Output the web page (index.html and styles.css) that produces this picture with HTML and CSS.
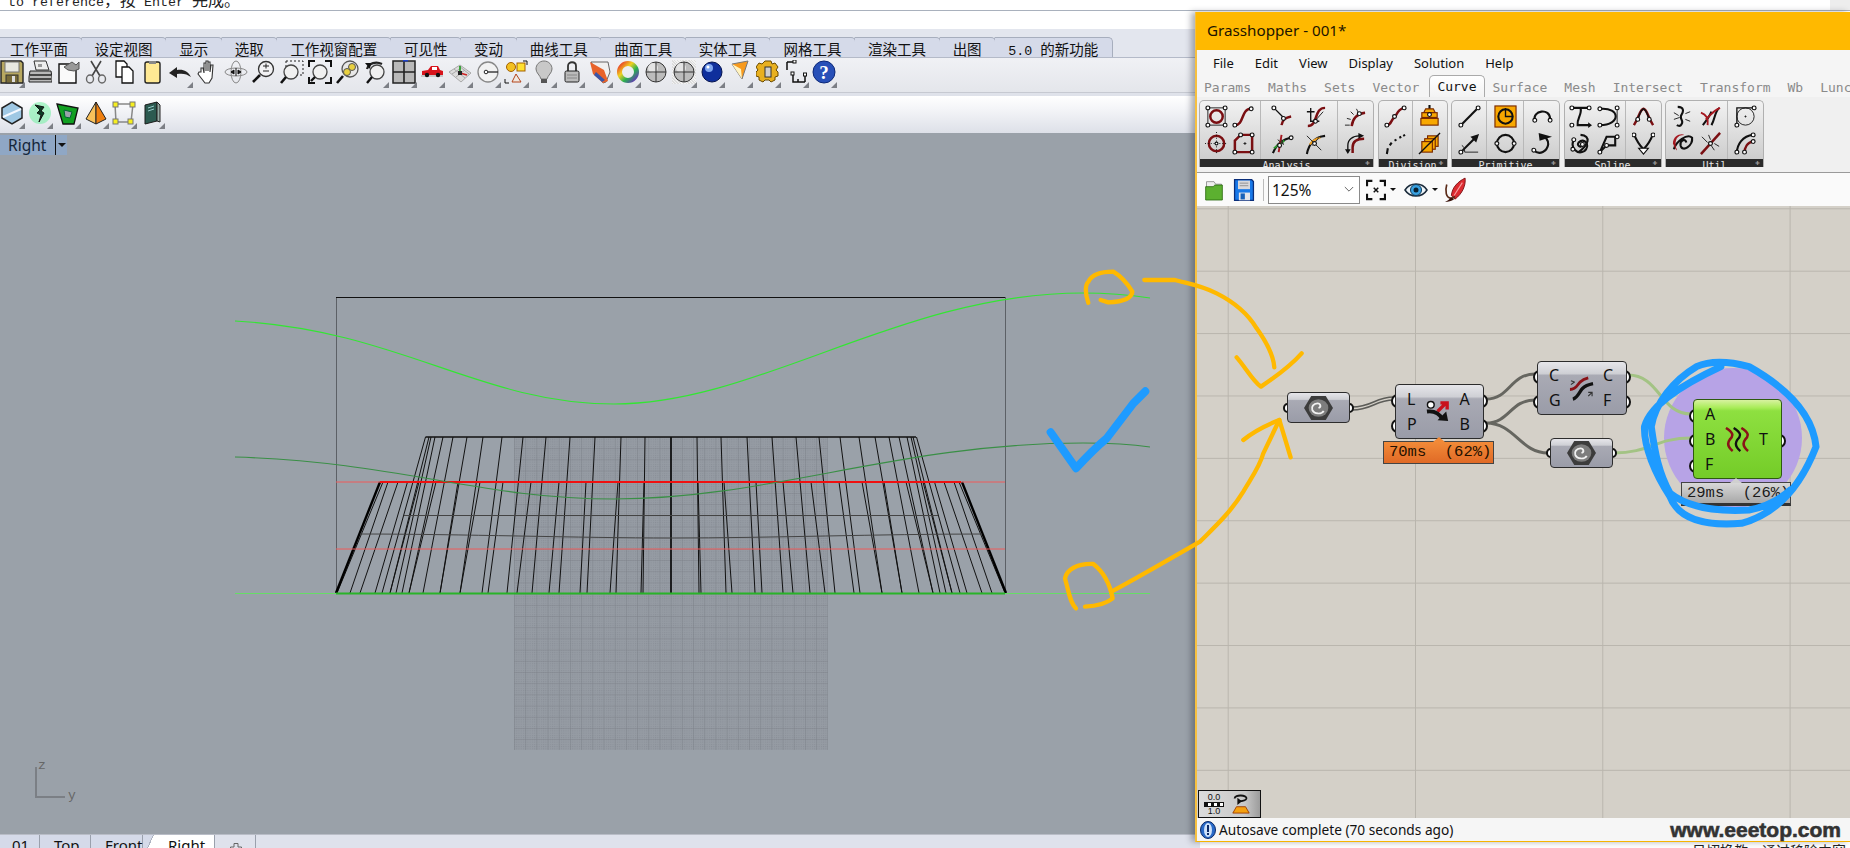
FILE: index.html
```html
<!DOCTYPE html>
<html lang="zh">
<head>
<meta charset="utf-8">
<title>Rhino + Grasshopper</title>
<link rel="stylesheet" href="styles.css">
</head>
<body>
<div class="cmd"><span class="cmdtext">to reference<span class="cj">，按</span> Enter <span class="cj">完成。</span></span><span class="scrollbtn"></span></div>
<div class="workspace">
  <div class="rhino">
    <div class="ribbon-top"></div>
    <div class="ribbon-tabs">
      <span class="rtab">工作平面</span><span class="rtab">设定视图</span><span class="rtab">显示</span><span class="rtab">选取</span><span class="rtab">工作视窗配置</span><span class="rtab">可见性</span><span class="rtab">变动</span><span class="rtab">曲线工具</span><span class="rtab">曲面工具</span><span class="rtab">实体工具</span><span class="rtab">网格工具</span><span class="rtab">渲染工具</span><span class="rtab">出图</span><span class="rtab"><span class="mono">5.0 </span>的新功能</span>
    </div>
    <div class="toolbar tb1">
      <span class="tb more"><svg viewBox="0 0 24 24"><path d="M1 1h20l2 2v20H1z" fill="#b8a860" stroke="#222" stroke-width="1.4"/><rect x="5" y="2" width="14" height="10" fill="#e8e8e0" stroke="#777"/><rect x="6" y="15" width="12" height="8" fill="#776a38" stroke="#333"/><rect x="12" y="16" width="3" height="6" fill="#ddd"/></svg></span>
      <span class="tb"><svg viewBox="0 0 24 24"><path d="M6 1h12l3 9H8z" fill="#eee" stroke="#333"/><path d="M2 11h21l1 6v5H1v-5z" fill="#b8b8b8" stroke="#222"/><path d="M2 15h21M2 19h21" stroke="#222" stroke-width="1.5"/><rect x="10" y="4" width="4" height="3" fill="#999"/></svg></span>
      <span class="tb"><svg viewBox="0 0 24 24"><path d="M3 4h11l6 6v13H3z" fill="#fafafa" stroke="#111" stroke-width="1.4"/><path d="M8 7l8-5 4 3 3-3v7l-5 2-6-1z" fill="#999" stroke="#555"/></svg></span>
      <span class="tb"><svg viewBox="0 0 24 24"><path d="M7 1l9 15M17 1L8 16" stroke="#444" stroke-width="1.6" fill="none"/><ellipse cx="6" cy="19" rx="3.5" ry="4" fill="none" stroke="#666" stroke-width="1.4"/><ellipse cx="18" cy="19" rx="3.5" ry="4" fill="none" stroke="#666" stroke-width="1.4"/></svg></span>
      <span class="tb"><svg viewBox="0 0 24 24"><path d="M4 1h8l3 3v13H4z" fill="#fff" stroke="#111" stroke-width="1.3"/><path d="M10 7h7l4 4v12H10z" fill="#fff" stroke="#111" stroke-width="1.3"/></svg></span>
      <span class="tb"><svg viewBox="0 0 24 24"><rect x="5" y="2" width="15" height="21" rx="2" fill="#ffe994" stroke="#222" stroke-width="1.4"/><rect x="9" y="1" width="7" height="3" fill="#888"/></svg></span>
      <span class="tb more"><svg viewBox="0 0 24 24"><path d="M1 13l8-6v3c6-1 11 1 14 7-4-3-8-4-14-3v4z" fill="#222"/></svg></span>
      <span class="tb"><svg viewBox="0 0 24 24"><path d="M5 12V8l2 0 1 5V3h2v8V1h2v10V2h2v10l1-7h2l-1 13-3 5H9L2 14l1-2z" fill="#fff" stroke="#333" stroke-width="1.1"/></svg></span>
      <span class="tb"><svg viewBox="0 0 24 24"><ellipse cx="12" cy="12" rx="11" ry="4" fill="none" stroke="#888"/><ellipse cx="12" cy="12" rx="5" ry="11" fill="none" stroke="#888"/><path d="M12 8v8M7 12l3-2v4zM17 12l-3-2v4z" stroke="#111" fill="#111"/></svg></span>
      <span class="tb"><svg viewBox="0 0 24 24"><circle cx="14" cy="9" r="7.5" fill="#f2f2f4" stroke="#333" stroke-width="1.3"/><path d="M8 15l-7 7" stroke="#111" stroke-width="2.6"/><path d="M11 6h6M14 3.500v5M11 11h6" stroke="#222"/></svg></span>
      <span class="tb"><svg viewBox="0 0 24 24"><rect x="6" y="1" width="17" height="14" fill="none" stroke="#222" stroke-dasharray="2 2"/><circle cx="11" cy="12" r="7" fill="#f0f0f0" stroke="#444" stroke-width="1.3"/><path d="M6 17l-5 6" stroke="#111" stroke-width="2.6"/></svg></span>
      <span class="tb"><svg viewBox="0 0 24 24"><circle cx="12" cy="12" r="7" fill="#f0f0f0" stroke="#444" stroke-width="1.3"/><path d="M7 17l-4 4" stroke="#111" stroke-width="2.4"/><path d="M1 7V1h6M17 1h6v6M1 17v6h6M23 17v6h-6" fill="none" stroke="#111" stroke-width="2"/></svg></span>
      <span class="tb"><svg viewBox="0 0 24 24"><circle cx="14" cy="9" r="8" fill="#e8e8e8" stroke="#555" stroke-width="1.3"/><circle cx="16" cy="7" r="3.500" fill="#e8d040" stroke="#555"/><circle cx="11" cy="12" r="3.500" fill="#e8d040" stroke="#555"/><path d="M7 16l-6 7" stroke="#111" stroke-width="2.6"/></svg></span>
      <span class="tb more"><svg viewBox="0 0 24 24"><circle cx="13" cy="12" r="7" fill="#f0f0f0" stroke="#444" stroke-width="1.3"/><path d="M8 17l-5 6" stroke="#111" stroke-width="2.4"/><path d="M3 9c2-6 9-8 15-5" fill="none" stroke="#222" stroke-width="2.2"/><path d="M1 3l6 0-1 6z" fill="#111"/></svg></span>
      <span class="tb more"><svg viewBox="0 0 24 24"><rect x="1" y="1" width="22" height="22" fill="#b9b9b9" stroke="#222" stroke-width="1.5"/><path d="M12 1v22M1 12h22" stroke="#222" stroke-width="1.6"/><rect x="11" y="0" width="5" height="1.500" fill="#2244cc"/></svg></span>
      <span class="tb more"><svg viewBox="0 0 24 24"><path d="M1 16h22" stroke="#bbb" stroke-width="1.500"/><path d="M2 15v-4l6-1 3-4h7l2 4 3 1v4z" fill="#d8141c"/><rect x="12" y="7" width="5" height="3" fill="#fff"/><circle cx="7" cy="15" r="2.200" fill="#111"/><circle cx="18" cy="15" r="2.200" fill="#111"/></svg></span>
      <span class="tb more"><svg viewBox="0 0 24 24"><path d="M1 12L12 5l11 8-10 9z" fill="#dcdcdc" stroke="#aaa"/><path d="M6 9l11 9M11 6l10 8M4 14l9-6M8 17l9-7" stroke="#aaa" fill="none"/><path d="M12 13V6" stroke="#1a9a1a" stroke-width="1.600"/><path d="M12 13l7 2" stroke="#cc2222" stroke-width="1.600"/><path d="M10 11h4v4h-4z" fill="#222"/></svg></span>
      <span class="tb more"><svg viewBox="0 0 24 24"><circle cx="12" cy="12" r="10" fill="#f2f2f2" stroke="#888" stroke-width="1.300"/><circle cx="10" cy="12" r="1.800" fill="#fff" stroke="#222"/><path d="M12 12h10" stroke="#222" stroke-width="1.300"/></svg></span>
      <span class="tb more"><svg viewBox="0 0 24 24"><circle cx="7" cy="7" r="4.500" fill="#f3c020" stroke="#a46000"/><rect x="13" y="3" width="8" height="8" fill="#ffe030" stroke="#a46000"/><path d="M12 14l5 8H8z" fill="#f0e8e0" stroke="#b4441a"/><path d="M1 19v4h4M23 1h-4M23 1v4" fill="none" stroke="#111"/></svg></span>
      <span class="tb more"><svg viewBox="0 0 24 24"><path d="M12 1c5 0 8 4 8 8 0 4-4 6-5 10H9C8 15 4 13 4 9c0-4 3-8 8-8z" fill="#c8c8c8" stroke="#777"/><rect x="9" y="19" width="6" height="4" fill="#555"/></svg></span>
      <span class="tb more"><svg viewBox="0 0 24 24"><path d="M8 11V6c0-5 8-5 8 0v5" fill="none" stroke="#333" stroke-width="1.800"/><rect x="5" y="11" width="14" height="11" rx="1.500" fill="#bbb" stroke="#222"/><path d="M7 15h10M7 18h10" stroke="#888"/></svg></span>
      <span class="tb more"><svg viewBox="0 0 24 24"><path d="M3 2h17l2 10-4 10-3 1z" fill="#f0f0f0" stroke="#666"/><path d="M2 2l14 8 4 11-5 2L5 14z" fill="#e8622a"/><path d="M8 12l9 8-3 2-8-7z" fill="#3b56a8"/></svg></span>
      <span class="tb more"><svg viewBox="0 0 24 24"><circle cx="12" cy="12" r="8.500" fill="none" stroke="url(#rb)" stroke-width="5"/><defs><linearGradient id="rb" x1="0" y1="0" x2="1" y2="1"><stop offset="0" stop-color="#e8342a"/><stop offset=".35" stop-color="#f0d020"/><stop offset=".65" stop-color="#28b050"/><stop offset="1" stop-color="#6a2cc0"/></linearGradient></defs></svg></span>
      <span class="tb"><svg viewBox="0 0 24 24"><circle cx="12" cy="12" r="10" fill="#bcbcbc" stroke="#333"/><circle cx="9" cy="8" r="5" fill="#eee" opacity=".8"/><path d="M12 2v20M2 12h20" stroke="#333"/></svg></span>
      <span class="tb more halftone"><svg viewBox="0 0 24 24"><circle cx="12" cy="12" r="10" fill="#bcbcbc" stroke="#333"/><circle cx="9" cy="8" r="5" fill="#eee" opacity=".8"/><path d="M12 2v20M2 12h20" stroke="#333"/></svg></span>
      <span class="tb more"><svg viewBox="0 0 24 24"><circle cx="12" cy="12" r="10" fill="#0f2f9c" stroke="#05134d"/><circle cx="9" cy="8" r="4" fill="#7fa6f0"/><circle cx="8" cy="7" r="1.500" fill="#fff"/></svg></span>
      <span class="tb more"><svg viewBox="0 0 24 24"><path d="M4 4l16-3-6 18z" fill="#f79a1e" stroke="#777"/><path d="M4 4l9 5 1 10z" fill="#fff3c0"/></svg></span>
      <span class="tb more"><svg viewBox="0 0 24 24"><path d="M9 1h6l1 3 3-1 3 4-2 3 2 2v4l-3 1 0 3-4 2-2-2-4 0-2 2-4-2 0-3-3-1v-4l2-2-2-3 3-4 3 1z" fill="#e8b020" stroke="#6a4a00"/><rect x="9" y="7" width="6" height="10" fill="#cfcfcf" stroke="#333"/></svg></span>
      <span class="tb more"><svg viewBox="0 0 24 24"><path d="M3 2v8M3 2h7M9 14v8h12M14 22v-3M21 22v-7" fill="none" stroke="#111" stroke-width="1.500"/><rect x="9" y="0" width="3" height="3" fill="#fff" stroke="#111"/><rect x="7" y="12" width="3" height="3" fill="#fff" stroke="#111"/><rect x="19.500" y="13" width="3" height="3" fill="#fff" stroke="#111"/></svg></span>
      <span class="tb more"><svg viewBox="0 0 24 24"><circle cx="12" cy="12" r="11" fill="#2850b8" stroke="#0c2878"/><text x="12" y="19" class="qmark">?</text></svg></span>
    </div>
    <div class="band"></div>
    <div class="toolbar tb2">
      <span class="tb more"><svg viewBox="0 0 24 24"><path d="M12 1l10 6v10l-10 6L2 17V7z" fill="#9fc8e4" stroke="#222" stroke-width="1.500"/><path d="M3 16L21 8" stroke="#f4f8ff" stroke-width="2"/></svg></span>
      <span class="tb more"><svg viewBox="0 0 24 24"><circle cx="12" cy="12" r="11" fill="#70f0a0" opacity=".55"/><path d="M7 4l9 2-3 4 3 2-5 9 2-7-4-2 3-3z" fill="#0b3d24" stroke="#111"/></svg></span>
      <span class="tb more"><svg viewBox="0 0 24 24"><path d="M1 3l21 4-4 16H7z" fill="#11a022" stroke="#111" stroke-width="1.300"/><path d="M8 9l8 2-2 6-5-1z" fill="#9aa1a9" stroke="#063"/></svg></span>
      <span class="tb more"><svg viewBox="0 0 24 24"><path d="M12 1L2 18l10 5z" fill="#f9c05a" stroke="#222"/><path d="M12 1l10 17-10 5z" fill="#ef7f10" stroke="#222"/></svg></span>
      <span class="tb more"><svg viewBox="0 0 24 24"><path d="M3 3h18l-2 18H4z" fill="none" stroke="#888" stroke-width="1.500"/><rect x="1" y="1" width="5" height="5" fill="#f6ee20" stroke="#777"/><rect x="18" y="1" width="5" height="5" fill="#f6ee20" stroke="#777"/><rect x="1" y="18" width="5" height="5" fill="#f6ee20" stroke="#777"/><rect x="16" y="18" width="5" height="5" fill="#f6ee20" stroke="#777"/></svg></span>
      <span class="tb more"><svg viewBox="0 0 24 24"><path d="M5 4l12-3v19L5 23z" fill="#2c5a50" stroke="#1a1a1a"/><path d="M17 1l3 3v17l-3-1z" fill="#96aaa4" stroke="#222"/><path d="M8 7l6-2M8 10l6-2" stroke="#9cc" /></svg></span>
    </div>
    <div class="viewport">
      <div class="vp-label"><span class="vp-name">Right</span><span class="vp-arrow"></span></div>
      <svg class="scene" viewBox="0 133 1200 701">
        <defs>
          <pattern id="minor" x="514" y="437" width="2.240" height="2.240" patternUnits="userSpaceOnUse"><rect width="1" height="1" fill="#8a8f98"/></pattern>
          <pattern id="major" x="514" y="437" width="11.190" height="11.190" patternUnits="userSpaceOnUse"><path d="M0 0H11.190M0 0V11.190" class="gridline"/></pattern>
          <g id="half">
            <path class="wire-dark" d="M425.500 437L382 593M429 437L390 593M431 437L396 593M435 437L402 593M443 437L409 593M453 437L423 593M467 437L440 593M483 437L460 593M502 437L482 593M523 437L507 593M546 437L532 593M570 437L559 593M595 437L587 593M621 437L616 593M645 437L643 593"/>
            <path class="wire-dark" d="M383 482L337 593M388 482L350 593M398 482L360 593M407.500 482L375 593M419 482L390 593M436 482L409 593M458 482L440 593M480 482L460 593M503 482L488 593M531 482L517 593M559 482L549 593M586 482L580 593M618 482L610 593M644 482L641 593"/>
            <path class="wire-edge" d="M380 482L336 593"/>
          </g>
        </defs>
        <rect x="514" y="437" width="314" height="313" class="gridbg"/>
        <rect x="514" y="437" width="314" height="313" fill="url(#minor)"/>
        <rect x="514" y="437" width="314" height="313" fill="url(#major)"/>
        <rect x="336.500" y="297.500" width="669" height="296" class="bbox"/>
        <path d="M336 297.500H1005" class="bbox-top"/>
        <use href="#half"/>
        <use href="#half" transform="translate(1342 0) scale(-1 1)"/>
        <path d="M671 437V593" class="wire-center"/>
        <path d="M425.500 437H916" class="wire-top"/>
        <path d="M404 515.500H938" class="wire-soft"/>
        <path d="M360 534C460 534 580 538 671 538C770 538 880 534 982 534" class="wire-soft"/>
        <path d="M336 482H1005M336 549H1005" class="red-thin"/>
        <path d="M380 482H961" class="red-thick"/>
        <path d="M235 321C400 330 480 404 614 404C760 404 900 293 1083 293C1110 293 1130 295 1150 298" class="crv-bright"/>
        <path d="M235 457C400 462 480 499 614 499C770 499 900 443 1083 443C1110 443 1130 444 1150 447" class="crv-dark"/>
        <path d="M235 593.500H1150" class="base-thin"/>
        <path d="M336 593.500H1005" class="base-thick"/>
        <path d="M36 767V797H65" class="axis"/>
        <text x="38" y="769" class="axis-label">z</text>
        <text x="68" y="799" class="axis-label">y</text>
      </svg>
    </div>
    <div class="vp-tabs">
      <span class="vtab vt01">01</span><span class="vtab">Top</span><span class="vtab vfront">Front</span><span class="vtab vright">Right</span><span class="vtab vplus"><svg class="plus" viewBox="0 0 12 12"><path d="M4 .5h4v3.500h3.500v4H8v3.500H4V8H.5V4H4z"/></svg></span>
    </div>
  </div>
  <div class="other"><span class="other-text">日切换教，通过移除内容</span></div>
</div>

<div class="gh">
  <div class="gh-title">Grasshopper - 001*</div>
  <div class="gh-menu"><span>File</span><span>Edit</span><span>View</span><span>Display</span><span>Solution</span><span>Help</span></div>
  <div class="gh-tabs"><span>Params</span><span>Maths</span><span>Sets</span><span>Vector</span><span class="on">Curve</span><span>Surface</span><span>Mesh</span><span>Intersect</span><span>Transform</span><span>Wb</span><span>Lunchbox</span></div>
  <div class="gh-ribbon">
    <div class="panel">
      <div class="panel-body">
        <div class="grp w61">
          <svg viewBox="0 0 24 24"><rect x="3" y="3" width="18" height="18" class="thin"/><circle cx="12" cy="12" r="6.500" class="red"/><circle cx="3" cy="3" r="2" class="pt"/><circle cx="21" cy="3" r="2" class="pt"/><circle cx="3" cy="21" r="2" class="pt"/><circle cx="21" cy="21" r="2" class="pt"/></svg>
          <svg viewBox="0 0 24 24"><circle cx="12" cy="12" r="8" class="red"/><path d="M12 0v24M0 12h24" class="dots"/><circle cx="12" cy="12" r="1.500" class="pt"/></svg>
          <svg viewBox="0 0 24 24"><path d="M3 21C13 21 9 4 20 4" class="red"/><circle cx="3" cy="21" r="2" class="pt"/><circle cx="20" cy="4" r="2" class="pt"/></svg>
          <svg viewBox="0 0 24 24"><path d="M3 9L9 3H21V21H3Z" class="red"/><path d="M12 12h3M13.500 10.500v3" class="thin"/><circle cx="3" cy="21" r="2" class="pt"/><circle cx="21" cy="21" r="2" class="pt"/><circle cx="21" cy="3" r="2" class="pt"/><circle cx="9" cy="3" r="2" class="pt"/></svg>
        </div>
        <div class="grp w77">
          <svg viewBox="0 0 24 24"><path d="M3 3L14 14" class="blk thin2"/><path d="M11 21C12 15 15 13 21 12" class="red"/><circle cx="3" cy="3" r="2" class="pt"/><circle cx="13" cy="14" r="2" class="pt"/></svg>
          <svg viewBox="0 0 24 24"><path d="M2 22C6 12 12 7 22 6" class="blk"/><path d="M3 17L14 9" class="grn"/><path d="M11 3L8 21" class="red2"/><path d="M7 8l6 5-2-5" class="thin"/><circle cx="21" cy="6" r="2" class="pt"/><circle cx="9" cy="14" r="2" class="pt"/></svg>
          <svg viewBox="0 0 24 24"><path d="M4 22C15 22 10 3 22 3" class="red"/><path d="M7 3V17H16M3 7H11" class="blk thin2"/><path d="M12 16L20 7" class="thin"/><circle cx="12" cy="17" r="2" class="pt"/></svg>
          <svg viewBox="0 0 24 24"><path d="M3 23C5 12 12 5 22 4" class="blk"/><path d="M6 13C9 9 12 7 17 6" class="ora"/><path d="M3 4l15 15M17 4L9 14" class="thin"/><circle cx="11" cy="12" r="2" class="pt"/></svg>
        </div>
        <div class="grp w35">
          <svg viewBox="0 0 24 24"><path d="M8 22C9 14 14 9 22 8" class="red"/><path d="M13 4l2 4M3 14l4 1M7 7l3 3M1 21h5" class="thin"/><circle cx="16" cy="9" r="2" class="pt"/></svg>
          <svg viewBox="0 0 24 24"><path d="M9 22V16C9 10 13 7 21 7" class="red"/><path d="M4 21V14C4 8 9 4 16 4" class="blk thin2"/><path d="M1 18h6l-3 5zM15 1l6 3-6 3z" class="fillk"/></svg>
        </div>
      </div>
      <div class="panel-foot">Analysis</div>
    </div>
    <div class="panel">
      <div class="panel-body">
        <div class="grp w34">
          <svg viewBox="0 0 24 24"><path d="M3 21C8 21 7 15 11 13C14 10 13 5 21 3" class="red"/><circle cx="3" cy="21" r="2" class="pt"/><circle cx="11" cy="12" r="2" class="pt"/><circle cx="21" cy="3" r="2" class="pt"/></svg>
          <svg viewBox="0 0 24 24"><path d="M3 23L4 17M6 14L8 11M11 9L13 8M16 6L18 5M20 4L22 3" class="blk"/></svg>
        </div>
        <div class="grp w34">
          <svg viewBox="0 0 24 24"><path d="M12 0V11" class="blk"/><path d="M8 4h8l2 4H6z" class="orab"/><rect x="4" y="8" width="16" height="5" class="orab"/><rect x="3" y="14" width="18" height="7" class="orab"/><circle cx="12" cy="10" r="2" class="pt"/></svg>
          <svg viewBox="0 0 24 24"><rect x="10" y="4" width="11" height="11" class="orab"/><rect x="7" y="7" width="11" height="11" class="orab"/><rect x="4" y="10" width="11" height="11" class="orab"/><path d="M1 23L23 1" class="blk thin2"/></svg>
        </div>
      </div>
      <div class="panel-foot">Division</div>
    </div>
    <div class="panel">
      <div class="panel-body">
        <div class="grp w35">
          <svg viewBox="0 0 24 24"><path d="M4 20L20 4" class="blk"/><circle cx="3" cy="21" r="2" class="pt"/><circle cx="21" cy="3" r="2" class="pt"/></svg>
          <svg viewBox="0 0 24 24"><path d="M3 21L21 3M21 21H7C7 17 6 15 4 14" class="thin"/><path d="M3 21L17 7" class="blk"/><path d="M22 2l-9 3 6 6z" class="fillk"/><circle cx="3" cy="21" r="2" class="pt"/></svg>
        </div>
        <div class="grp w37">
          <svg viewBox="0 0 24 24"><rect x="1" y="1" width="22" height="22" class="orab"/><circle cx="12" cy="12" r="7.500" class="blk fillnone"/><path d="M12 3v9h7" class="blk thin2"/></svg>
          <svg viewBox="0 0 24 24"><circle cx="12" cy="12" r="9" class="blk"/><circle cx="3" cy="12" r="2" class="pt"/><circle cx="21" cy="12" r="2" class="pt"/></svg>
        </div>
        <div class="grp w35">
          <svg viewBox="0 0 24 24"><path d="M5 16C2 6 21 2 21 15" class="blk"/><circle cx="5" cy="16" r="2" class="pt"/><circle cx="21" cy="16" r="2" class="pt"/></svg>
          <svg viewBox="0 0 24 24"><path d="M4 19C10 25 18 20 19 13C19 8 16 5 12 4" class="blk"/><path d="M23 5L9 1l1 8z" class="fillk"/><circle cx="4" cy="19" r="2" class="pt"/></svg>
        </div>
      </div>
      <div class="panel-foot">Primitive</div>
    </div>
    <div class="panel">
      <div class="panel-body">
        <div class="grp w61">
          <svg viewBox="0 0 24 24"><path d="M3 3H21M12 3C14 10 8 14 9 21H22" class="blk"/><path d="M20 18l4 3-4 3z" class="fillk"/><circle cx="3" cy="3" r="2" class="pt"/><circle cx="21" cy="3" r="2" class="pt"/><circle cx="3" cy="21" r="2" class="pt"/></svg>
          <svg viewBox="0 0 24 24"><path d="M12 3C24 4 20 14 10 21" class="blk"/><path d="M5 8C1 16 8 24 16 20C23 14 16 5 10 11C8 14 12 17 14 14" class="blk"/><circle cx="5" cy="8" r="2" class="pt"/><circle cx="14" cy="13" r="2" class="pt"/><circle cx="4" cy="18" r="2" class="pt"/></svg>
          <svg viewBox="0 0 24 24"><path d="M3 4C25 2 25 21 3 21" class="blk"/><path d="M21 3V21" class="thin"/><circle cx="3" cy="4" r="2" class="pt"/><circle cx="3" cy="21" r="2" class="pt"/><circle cx="21" cy="3" r="2" class="pt"/><circle cx="21" cy="21" r="2" class="pt"/></svg>
          <svg viewBox="0 0 24 24"><path d="M3 21L10 5H21M10 14H19V5M3 21L9 15" class="blk"/><circle cx="21" cy="5" r="2" class="pt"/><circle cx="10" cy="14" r="2" class="pt"/><circle cx="3" cy="21" r="2" class="pt"/></svg>
        </div>
        <div class="grp w35">
          <svg viewBox="0 0 24 24"><path d="M2 21C8 12 8 5 12 4C16 5 16 12 22 21" class="red"/><path d="M6 15C8 10 9 5 12 4C15 5 16 10 18 15" class="blk thin2"/><circle cx="6" cy="15" r="2" class="pt"/><circle cx="18" cy="15" r="2" class="pt"/></svg>
          <svg viewBox="0 0 24 24"><path d="M2 2C5 10 8 14 12 18C16 14 19 10 22 2" class="blk"/><path d="M7 17h10l-5 6z" class="arrow"/><circle cx="2" cy="3" r="2" class="pt"/><circle cx="22" cy="3" r="2" class="pt"/></svg>
        </div>
      </div>
      <div class="panel-foot">Spline</div>
    </div>
    <div class="panel">
      <div class="panel-body">
        <div class="grp w62">
          <svg viewBox="0 0 24 24"><path d="M7 2C14 2 13 7 11 10C8 15 14 16 11 20C10 22 8 22 6 21" class="blk"/><path d="M3 8l5 3M3 15l6-2M15 9l5-2M15 15l5 2" class="thin"/></svg>
          <svg viewBox="0 0 24 24"><path d="M3 18C5 10 17 1 22 6C23 14 12 22 10 14C9 9 15 6 16 11" class="blk"/><path d="M2 12C2 4 10 1 14 3C6 3 4 8 5 16C8 21 5 20 2 12Z" class="fillr"/></svg>
          <svg viewBox="0 0 24 24"><path d="M4 21C8 16 11 12 13 7M13 21C17 14 16 8 21 3" class="blk"/><path d="M7 15C12 11 14 6 22 3M2 8C8 10 10 14 9 21" class="red2"/></svg>
          <svg viewBox="0 0 24 24"><path d="M2 23L22 1" class="red"/><path d="M3 5l6 6M10 3l2 5M16 19l-4-6M21 15l-5-3" class="thin"/><circle cx="12" cy="12" r="2" class="pt"/></svg>
        </div>
        <div class="grp w35">
          <svg viewBox="0 0 24 24"><circle cx="12" cy="12" r="9" class="thin"/><path d="M3 21V3H21" class="blk thin2"/><path d="M11 12h2M12 11v2" class="thin"/><circle cx="3" cy="21" r="2" class="pt"/><circle cx="21" cy="3" r="2" class="pt"/></svg>
          <svg viewBox="0 0 24 24"><path d="M3 22C3 13 9 4 20 3" class="blk"/><path d="M11 22C11 16 14 11 20 10" class="red"/><circle cx="3" cy="21" r="2" class="pt"/><circle cx="11" cy="21" r="2" class="pt"/><circle cx="20" cy="3" r="2" class="pt"/><circle cx="20" cy="10" r="2" class="pt"/></svg>
        </div>
      </div>
      <div class="panel-foot">Util</div>
    </div>
  </div>
  <div class="gh-tools">
    <svg class="ti" viewBox="0 0 24 28"><path d="M3 4h9l2 3h7v5H3z" fill="#eee" stroke="#888"/><path d="M2 10h9l2-2h9v18H2z" fill="#5cb030" stroke="#2a6a10"/></svg>
    <svg class="ti ti2" viewBox="0 0 24 28"><path d="M1 2h20l2 2v22H1z" fill="#1878e8" stroke="#0a2e7a" stroke-width="1.500"/><rect x="5" y="3" width="14" height="10" fill="#d8d8dc"/><path d="M7 6h10M7 9h10" stroke="#888"/><rect x="6" y="17" width="13" height="9" fill="#e4e4ea"/><rect x="8" y="18" width="5" height="7" fill="#1860b8"/></svg>
    <span class="tsep"></span>
    <div class="combo"><span>125%</span><svg class="chev" viewBox="0 0 12 8"><path d="M1 1l5 5 5-5"/></svg></div>
    <svg class="ti frame" viewBox="0 0 22 24"><path d="M1 8V2h6M15 2h6v6M1 16v6h6M15 22h6v-6" fill="none" stroke="#111" stroke-width="2.600"/><path d="M8.500 9.500l5 5M13.500 9.500l-5 5" stroke="#111" stroke-width="1.600"/></svg>
    <span class="tdrop"></span>
    <svg class="ti eye" viewBox="0 0 24 18"><path d="M1 9C6 1 18 1 23 9C18 17 6 17 1 9Z" fill="#eef4f8" stroke="#1a2a3a" stroke-width="1.500"/><circle cx="12" cy="9" r="5.500" fill="#38a0e0" stroke="#0c3a5a"/><circle cx="12" cy="9" r="2.500" fill="#082030"/></svg>
    <span class="tdrop"></span>
    <svg class="ti pen" viewBox="0 0 24 28"><path d="M8 20C9 11 15 5 23 1C24 9 20 18 12 24Z" fill="#dc2a30" stroke="#7a0f12"/><path d="M11 20L20 6" stroke="#f6a0a0" stroke-width="1.200"/><path d="M3 8c-2 7-1 15 5 15 2 0 3-1 4-2" fill="none" stroke="#5a2a18" stroke-width="1.800"/><path d="M1 27c3-1 5-3 7-5l3 2c-3 2-6 3-10 3z" fill="#3a120a"/></svg>
  </div>
  <div class="canvas">
    <svg class="canvas-svg" viewBox="1197 206 653 612">
      <ellipse cx="1733" cy="438" rx="69" ry="70" class="highlight"/>
      <path d="M1352 407C1372 407 1375 397 1394 397M1352 410C1372 410 1375 400 1394 400" class="wire-thin"/>
      <path d="M1486 399C1510 399 1510 374 1535 374M1486 423C1510 423 1510 400 1535 400M1486 423C1515 423 1520 453 1548 453" class="wire-grey"/>
      <path d="M1628 375C1660 375 1660 414 1691 414M1614 453C1650 453 1655 438 1691 438" class="wire-green"/>
    </svg>
    <div class="node param p1"><span class="grip gl"></span><svg class="hex" viewBox="0 0 28 28" preserveAspectRatio="none"><path d="M7 1h14l7 13-7 13H7L0 14z" fill="#3c3c3c"/><circle cx="14" cy="14" r="9.500" fill="#7d7d7d"/><path d="M14 14c3-1 2-5-1-5-4 0-6 4-5 7 2 5 9 5 11 1" fill="none" stroke="#f2f2f2" stroke-width="1.800"/></svg><span class="grip gr"></span></div>
    <div class="node n2">
      <div class="col in"><span class="port">L</span><span class="port">P</span></div>
      <svg class="nico" viewBox="0 0 26 26"><circle cx="5" cy="6" r="3.500" fill="#fff" stroke="#111" stroke-width="1.500"/><path d="M12 13l9-9M15 4h7v7" fill="none" stroke="#c8121c" stroke-width="3.500"/><path d="M1 13c8-1 13 2 16 8" fill="none" stroke="#111" stroke-width="4"/><path d="M12 22l11 1-2-10z" fill="#111"/></svg>
      <div class="col out"><span class="port">A</span><span class="port">B</span></div>
    </div>
    <div class="tag tag-ora t1">70ms  (62%)</div>
    <div class="node n3">
      <div class="col in"><span class="port">C</span><span class="port">G</span></div>
      <svg class="nico" viewBox="0 0 26 26"><path d="M1 14C8 14 9 8 12 6C14 4 16 3 20 2" fill="none" stroke="#8a1218" stroke-width="3"/><path d="M4 24C9 23 11 16 14 13C17 10 20 9 25 8" fill="none" stroke="#111" stroke-width="3.400"/><path d="M2 9l4-3M2 5l3 1M20 21l4-4M24 21v-4h-4" fill="none" stroke="#333" stroke-width="1.200"/></svg>
      <div class="col out"><span class="port">C</span><span class="port">F</span></div>
    </div>
    <div class="node param p2"><span class="grip gl"></span><svg class="hex" viewBox="0 0 28 28" preserveAspectRatio="none"><path d="M7 1h14l7 13-7 13H7L0 14z" fill="#3c3c3c"/><circle cx="14" cy="14" r="9.500" fill="#7d7d7d"/><path d="M14 14c3-1 2-5-1-5-4 0-6 4-5 7 2 5 9 5 11 1" fill="none" stroke="#f2f2f2" stroke-width="1.800"/></svg><span class="grip gr"></span></div>
    <div class="node n5">
      <div class="col in"><span class="port">A</span><span class="port">B</span><span class="port">F</span></div>
      <svg class="nico" viewBox="0 0 26 26"><path d="M1 1C9 6 9 9 5 13C2 17 3 21 8 25M17 1C25 6 25 9 21 13C18 17 19 21 24 25" fill="none" stroke="#8a1218" stroke-width="2.600"/><path d="M9 1C17 6 17 9 13 13C10 17 11 21 16 25" fill="none" stroke="#111" stroke-width="2.400"/></svg>
      <div class="col out"><span class="port">T</span></div>
    </div>
    <div class="tag tag-grey t2">29ms  (26%)</div>
    <div class="widget">
      <span class="slider"><span class="sl-t">0.0</span><span class="sl-bar"></span><span class="sl-t">1.0</span></span>
      <svg class="wico" viewBox="0 0 22 24"><path d="M4 6c0-5 14-4 13 0-1 3-7 3-9 3" fill="none" stroke="#111" stroke-width="2"/><path d="M7 5l5 4-5 4z" fill="#111"/><path d="M6 15h10l4 7H2z" fill="#f4a010" stroke="#9a3a00"/></svg>
    </div>
  </div>
  <div class="gh-status">
    <svg class="st-ico" viewBox="0 0 16 18"><ellipse cx="8" cy="9" rx="7.500" ry="8.500" fill="#2a6ac8" stroke="#0c2a68"/><ellipse cx="8" cy="9" rx="4" ry="7" fill="#cfe2fa"/><rect x="7" y="4" width="2" height="7" fill="#0c2a68"/><rect x="7" y="12" width="2" height="2" fill="#0c2a68"/></svg>
    <span class="st-text">Autosave complete (70 seconds ago)</span>
    <span class="mark">www.eeetop.com</span>
  </div>
</div>

<svg class="ink" viewBox="0 0 1850 848">
  <g transform="translate(1000 250) scale(.3333)">
    <path class="amber" d="M265 158C255 130 255 105 265 95C275 75 300 65 340 65C365 80 385 105 397 125C395 145 370 155 325 157L302 150"/>
    <path class="amber" d="M433 90L525 90C560 100 600 105 650 130C700 155 740 185 770 235C795 270 820 310 823 352"/>
    <path class="amber" d="M710 322C735 350 760 395 783 410C820 385 870 350 905 310"/>
    <path class="amber" d="M228 1075C210 1060 205 1020 195 985C200 960 230 940 280 942C310 965 330 1005 338 1045C320 1060 290 1068 255 1070"/>
    <path class="amber" d="M340 1022C400 990 470 950 600 875C640 835 690 790 730 725C750 690 780 650 790 610L838 510"/>
    <path class="amber" d="M730 570C760 545 800 525 838 510L872 622"/>
    <path class="blue" d="M152 547L228 655C260 620 290 590 320 565L400 460L436 424"/>
  </g>
  <g transform="translate(1260 340) scale(.3762 .3333)">
    <path class="blue-loop" d="M1225 80C1130 130 1040 190 1022 260C1020 320 1050 400 1090 470C1110 530 1170 560 1280 550C1380 520 1440 430 1478 320C1470 230 1410 150 1300 80C1250 65 1200 60 1160 80C1100 120 1050 190 1040 260C1050 340 1060 400 1090 460C1140 505 1220 515 1300 510C1350 500 1390 470 1410 450"/>
  </g>
</svg>
</body>
</html>
```
FILE: styles.css
```css
* { box-sizing: border-box; }
html, body { margin: 0; padding: 0; }
body {
  position: relative;
  width: 1850px;
  height: 848px;
  overflow: hidden;
  background: #fff;
  font-family: "Noto Sans", "Noto Sans CJK SC", sans-serif;
  display: flex;
  flex-direction: column;
}

/* command line */
.cmd {
  height: 11px;
  flex: none;
  overflow: hidden;
  border-bottom: 1px solid #a9b1bd;
  padding-left: 8px;
  position: relative;
  font: 13.33px/4px "Liberation Mono", "Noto Sans CJK SC", monospace;
  color: #222;
}
.cj { font-size: 16px; }
.scrollbtn {
  position: absolute;
  right: 0;
  top: 0;
  width: 20px;
  height: 10px;
  background: #ededed;
}
.workspace { flex: 1; display: flex; min-height: 0; }

/* rhino */
.rhino { width: 1200px; flex: none; display: flex; flex-direction: column; padding-top: 18px; }
.ribbon-top { height: 8px; flex: none; background: #e3e6ee; }
.ribbon-tabs {
  height: 21px;
  flex: none;
  display: flex;
  background: #e3e6ee;
  border-bottom: 1px solid #b4bac8;
  overflow: hidden;
  isolation: isolate;
}
.rtab {
  position: relative;
  height: 20px;
  padding: 0 13.6px 0 13px;
  font: 14.5px/21px "Noto Sans CJK SC", sans-serif;
  color: #111;
  white-space: pre;
  background: #d5dae9;
  border-top: 1px solid #a7aebd;
  border-right: 1px solid #a7aebd;
  border-top-right-radius: 5px;
  margin-left: -1px;
}
.rtab:first-child { margin-left: -3px; }
.rtab::before {
  content: "";
  position: absolute;
  left: -6px;
  top: -1px;
  width: 12px;
  height: 20px;
  background: #d5dae9;
  border-left: 1px solid #a7aebd;
  border-top: 1px solid #a7aebd;
  transform: skewX(-30deg);
  z-index: -1;
}
.mono { font: 13.33px "Liberation Mono", monospace; }
.toolbar { display: flex; flex: none; }
.tb1 {
  height: 35px;
  margin-left: -2px;
  padding-bottom: 6px;
  background: linear-gradient(#f0f1f5, #e4e6eb);
  border-bottom: 1px solid #c6c9d1;
  width: 1202px;
}
.band { height: 3px; flex: none; background: #dfe2ea; }
.tb2 {
  height: 37px;
  margin-left: -2px;
  width: 1202px;
  padding: 2px 0 6px;
  background: linear-gradient(#fff, #f4f5f8 35%, #dde0e8);
}
.tb {
  width: 28px;
  height: 100%;
  flex: none;
  position: relative;
  display: flex;
  align-items: center;
  justify-content: center;
}
.tb svg { width: 24px; height: 24px; display: block; }
.more::after {
  content: "";
  position: absolute;
  right: 1px;
  bottom: -2px;
  border-style: solid;
  border-width: 0 0 6px 6px;
  border-color: transparent transparent #7c7f85 transparent;
}
.halftone svg { background: repeating-linear-gradient(45deg, #ddd 0 1px, #f3f3f3 1px 2px); }
.qmark { font: bold 19px "Liberation Serif", serif; fill: #fff; text-anchor: middle; }

/* viewport */
.viewport { flex: 1; min-height: 0; position: relative; background: #9aa1a9; }
.scene { display: block; width: 1200px; height: 701px; }
.vp-label {
  position: absolute;
  left: 0;
  top: 2px;
  width: 67px;
  height: 20px;
  background: #8fa7c5;
  display: flex;
  align-items: center;
  z-index: 1;
}
.vp-name {
  width: 56px;
  height: 20px;
  padding-left: 8px;
  font-size: 15.5px;
  line-height: 20px;
  color: #14263a;
  border-right: 1px solid #111;
}
.vp-arrow {
  margin-left: 2px;
  border-style: solid;
  border-width: 4px 4px 0;
  border-color: #111 transparent transparent;
}
.gridbg { fill: #959ba3; }
.gridline { stroke: #7f838b; stroke-width: 1; fill: none; }
.bbox { fill: none; stroke: #5c6066; stroke-width: 1; }
.bbox-top { stroke: #111; stroke-width: 1; fill: none; }
.wire-dark { stroke: #111; stroke-width: 1; fill: none; }
.wire-edge { stroke: #000; stroke-width: 2.4; fill: none; }
.wire-center { stroke: #000; stroke-width: 1.6; fill: none; }
.wire-top { stroke: #111; stroke-width: 1.6; fill: none; }
.wire-soft { stroke: #444; stroke-width: 1; fill: none; }
.red-thin { stroke: #ef5a5a; stroke-width: 1; fill: none; }
.red-thick { stroke: #f01010; stroke-width: 1.8; fill: none; }
.crv-bright { stroke: #33e633; stroke-width: 1.1; fill: none; }
.crv-dark { stroke: #3a8f46; stroke-width: 1.1; fill: none; }
.base-thin { stroke: #66dd66; stroke-width: 1; fill: none; }
.base-thick { stroke: #28b428; stroke-width: 2; fill: none; }
.axis { stroke: #7b7f85; stroke-width: 2; fill: none; }
.axis-label { font: 13px "Liberation Mono", monospace; fill: #666; }

/* view tabs */
.vp-tabs {
  height: 14px;
  flex: none;
  display: flex;
  overflow: hidden;
  background: #dfe2ec;
  border-top: 1px solid #b9bdc7;
  font-size: 15px;
  line-height: 20px;
  color: #111;
}
.vtab {
  height: 20px;
  padding-left: 14px;
  border-right: 1px solid #9aa0ac;
  background: #d5dae9;
  flex: none;
}
.vt01 { width: 40px; padding-left: 12px; }
.vtab:nth-child(2) { width: 51px; }
.vfront { width: 52px; }
.vright {
  width: 72px;
  padding-left: 25px;
  background: linear-gradient(115deg, #d5dae9 0 9px, #aeb4c2 9px 10px, #fff 10px);
}
.vplus { width: 41px; padding: 8px 0 0 15px; background: #dfe2ec; }
.plus { display: block; width: 12px; height: 12px; fill: none; stroke: #666; stroke-width: 1; }

.other { flex: 1; display: flex; align-items: flex-end; justify-content: flex-end; overflow: hidden; }
.other-text { font-size: 14px; line-height: 18px; height: 6px; color: #222; overflow: hidden; white-space: nowrap; padding-right: 4px; }

/* grasshopper window */
.gh {
  position: absolute;
  left: 1195px;
  top: 12px;
  right: 0;
  bottom: 6px;
  display: flex;
  flex-direction: column;
  background: #f5f5f5;
  border-left: 2px solid #f6c040;
  border-bottom: 1px solid #f6b400;
  box-shadow: -4px 0 6px rgba(30, 35, 45, .35);
  z-index: 2;
}
.gh-title {
  height: 38px;
  flex: none;
  margin-left: -1px;
  padding-left: 11px;
  background: #ffb900;
  color: #1c1400;
  font-size: 15.2px;
  line-height: 37px;
}
.gh-menu {
  height: 25px;
  flex: none;
  display: flex;
  gap: 21px;
  padding-left: 16px;
  font-size: 13px;
  line-height: 26px;
  color: #111;
}
.gh-tabs {
  height: 22px;
  flex: none;
  display: flex;
  gap: 17px;
  padding-left: 7px;
  white-space: nowrap;
  overflow: hidden;
  font: 13px/25px "DejaVu Sans Mono", monospace;
  color: #8a8a8a;
}
.gh-tabs .on {
  color: #111;
  background: linear-gradient(#fff, #f1f1f1);
  border: 1px solid #aaa;
  border-bottom: 0;
  border-radius: 5px 5px 0 0;
  padding: 0 7px;
  margin: 0 -9px 0 -7px;
  line-height: 22px;
  height: 25px;
}
.gh-ribbon {
  height: 76px;
  flex: none;
  display: flex;
  gap: 3.5px;
  padding: 3px 0 0 2px;
  background: #f0f0f0;
  border-bottom: 1px solid #9a9a9a;
}
.panel {
  height: 67px;
  flex: none;
  border: 1px solid #b0b0b0;
  border-bottom: 0;
  border-radius: 5px 5px 0 0;
  background: linear-gradient(#f2f2f2, #c8c8c8);
  overflow: hidden;
  display: flex;
  flex-direction: column;
}
.panel-body { flex: 1; display: flex; min-height: 0; }
.panel-foot {
  height: 8px;
  flex: none;
  overflow: hidden;
  position: relative;
  background: #2b2b2b;
  color: #e6e6e6;
  text-align: center;
  font: 10px/13px "DejaVu Sans Mono", monospace;
}
.panel-foot::after {
  content: "✚";
  position: absolute;
  right: 3px;
  top: -1px;
  font-size: 8px;
  line-height: 10px;
  color: #999;
}
.grp {
  display: grid;
  grid-auto-flow: column;
  grid-template-rows: 27px 27px;
  justify-content: space-evenly;
  align-content: center;
  align-items: center;
  justify-items: center;
  border-right: 1px solid #b8b8b8;
  flex: none;
}
.grp:last-child { border-right: 0; }
.grp svg { width: 23px; height: 23px; display: block; }
.w61 { width: 61px; }
.w62 { width: 62px; }
.w77 { width: 77px; }
.w34 { width: 34px; }
.w35 { width: 35px; }
.w37 { width: 37px; }
.pt { fill: #fff; stroke: #111; stroke-width: 1.2; }
.thin { fill: none; stroke: #222; stroke-width: 1; }
.red { fill: none; stroke: #7a0f12; stroke-width: 2.6; }
.red2 { fill: none; stroke: #a51820; stroke-width: 2; }
.blk { fill: none; stroke: #111; stroke-width: 2.2; }
.thin2 { stroke-width: 1.4; }
.grn { fill: none; stroke: #2f9a30; stroke-width: 2; }
.ora { fill: none; stroke: #f0a020; stroke-width: 2; }
.dots { fill: none; stroke: #111; stroke-width: 1; stroke-dasharray: 1 2; }
.orab { fill: #f8a800; stroke: #7a2a00; stroke-width: 1.2; }
.fillk { fill: #111; }
.fillr { fill: #a51820; }
.arrow { fill: #fff; stroke: #111; stroke-width: 1.2; }
.fillnone { fill: none; }

.gh-tools {
  height: 33px;
  flex: none;
  display: flex;
  align-items: center;
  padding-left: 7px;
  background: #fafafa;
}
.ti { display: block; width: 20px; height: 24px; flex: none; }
.ti2 { width: 22px; margin-left: 9px; }
.tsep { width: 1px; height: 22px; background: #bbb; margin: 0 4px 0 8px; }
.combo {
  width: 92px;
  height: 28px;
  flex: none;
  background: #fff;
  border: 1px solid #8a8a8a;
  padding: 0 5px 0 3px;
  font-size: 15.5px;
  line-height: 26px;
  color: #111;
  display: flex;
  justify-content: space-between;
  align-items: center;
}
.chev { width: 10px; height: 7px; fill: none; stroke: #666; stroke-width: 1.2; }
.frame { width: 20px; height: 22px; margin-left: 6px; }
.tdrop {
  margin: 0 7px 0 4px;
  border-style: solid;
  border-width: 3px 3px 0;
  border-color: #111 transparent transparent;
}
.eye { width: 24px; height: 18px; margin-left: 1px; }
.pen { width: 22px; height: 26px; margin-left: -1px; }

/* canvas */
.canvas {
  flex: 1;
  min-height: 0;
  position: relative;
  isolation: isolate;
  overflow: hidden;
  background-color: #d4d0c8;
  background-image: linear-gradient(#b9b5ad 1px, transparent 1px), linear-gradient(90deg, #b9b5ad 1px, transparent 1px);
  background-size: 187.3px 62.4px;
  background-position: 30.7px 2.3px;
}
.canvas-svg { position: absolute; left: 0; top: 0; width: 653px; height: 612px; z-index: -2; }
.highlight { fill: #b7a3e6; }
.wire-thin { fill: none; stroke: #5c5c58; stroke-width: 1.6; }
.wire-grey { fill: none; stroke: #666660; stroke-width: 3; }
.wire-green { fill: none; stroke: #a3c384; stroke-width: 3; }

.node {
  position: absolute;
  display: flex;
  justify-content: space-between;
  align-items: center;
  border: 1px solid #2c2c2c;
  border-radius: 4px;
  background: linear-gradient(#e6e6ea 0, #cfd0d5 22%, #a9aab4 26%, #9a9ca8 100%);
  font-size: 16px;
  color: #111;
}
.param { justify-content: center; }
.hex { width: 29px; height: 26px; }
.nico { width: 25px; height: 25px; flex: none; }
.p1 { left: 90px; top: 186px; width: 63px; height: 31px; }
.p2 { left: 353px; top: 232px; width: 63px; height: 30px; }
.n2 { left: 198px; top: 178px; width: 89px; height: 55px; }
.n3 { left: 340px; top: 155px; width: 90px; height: 54px; }
.n5 {
  left: 496px;
  top: 193px;
  width: 89px;
  height: 80px;
  border-color: #2e5a10;
  background: linear-gradient(#d8f2a0 0, #a8ec58 10%, #8ee040 14%, #74cc28 100%);
}
.col { display: flex; flex-direction: column; justify-content: center; align-self: stretch; }
.in { padding-left: 11px; }
.out { padding-right: 13px; }
.port { height: 25px; line-height: 24px; position: relative; }
.port::before {
  content: "";
  position: absolute;
  top: 7px;
  width: 9px;
  height: 10px;
  border: 2px solid #111;
  border-radius: 50%;
  background: #fff;
  z-index: -1;
}
.in .port::before { left: -16px; }
.out .port::before { right: -18px; }
.grip {
  position: absolute;
  top: 50%;
  width: 9px;
  height: 10px;
  margin-top: -5px;
  border: 2px solid #111;
  border-radius: 50%;
  background: #fff;
  z-index: -1;
}
.gl { left: -5px; }
.gr { right: -5px; }

.tag {
  position: absolute;
  white-space: pre;
  border: 1px solid #444;
  font: 15.5px/21px "Liberation Mono", monospace;
  color: #1a1a1a;
  padding-left: 5px;
}
.tag::before {
  content: "";
  position: absolute;
  left: 50%;
  top: -5px;
  margin-left: -6px;
  border-style: solid;
  border-width: 0 6px 5px;
  border-color: transparent transparent currentColor;
}
.tag-ora { background: linear-gradient(#f28a38, #e06a26); color: #241000; }
.tag-ora::before { border-bottom-color: #f28a38; }
.tag-grey { background: linear-gradient(#d8d8d8, #a8a8a8); border-bottom: 3px solid #333; }
.tag-grey::before { border-bottom-color: #d0d0d0; }
.t1 { left: 186px; top: 235px; width: 111px; height: 23px; }
.t2 { left: 484px; top: 276px; width: 110px; height: 24px; }

.widget {
  position: absolute;
  left: 1px;
  bottom: 0;
  width: 63px;
  height: 28px;
  display: flex;
  align-items: center;
  gap: 6px;
  padding-left: 4px;
  border: 1px solid #111;
  background: linear-gradient(90deg, #dcdcdc, #c8c8c8 75%, #9c9c9c);
}
.slider { display: flex; flex-direction: column; align-items: center; width: 22px; }
.sl-t { font: 9px/9px "Liberation Sans", sans-serif; color: #111; }
.sl-bar { width: 20px; height: 5px; background: repeating-linear-gradient(90deg, #111 0 3px, #fff 3px 6px); border: 1px solid #111; }
.wico { width: 20px; height: 22px; }

.gh-status {
  height: 23px;
  flex: none;
  display: flex;
  align-items: center;
  padding-left: 2px;
  background: #f6f6f6;
  position: relative;
}
.st-ico { width: 16px; height: 18px; flex: none; margin-left: 1px; }
.st-text { margin-left: 3px; font-size: 13.7px; color: #111; white-space: nowrap; }
.mark {
  position: absolute;
  right: 9px;
  top: 1px;
  font: bold 21px/22px "Liberation Sans", sans-serif;
  color: #333;
  -webkit-text-stroke: .6px #333;
}

/* hand-drawn notes */
.ink { position: absolute; left: 0; top: 0; width: 1850px; height: 848px; pointer-events: none; z-index: 3; }
.amber { fill: none; stroke: #ffb900; stroke-width: 13; stroke-linecap: round; stroke-linejoin: round; }
.blue { fill: none; stroke: #1e9bff; stroke-width: 24; stroke-linecap: round; stroke-linejoin: round; }
.blue-loop { fill: none; stroke: #1e9bff; stroke-width: 7; stroke-linecap: round; stroke-linejoin: round; vector-effect: non-scaling-stroke; }
```
